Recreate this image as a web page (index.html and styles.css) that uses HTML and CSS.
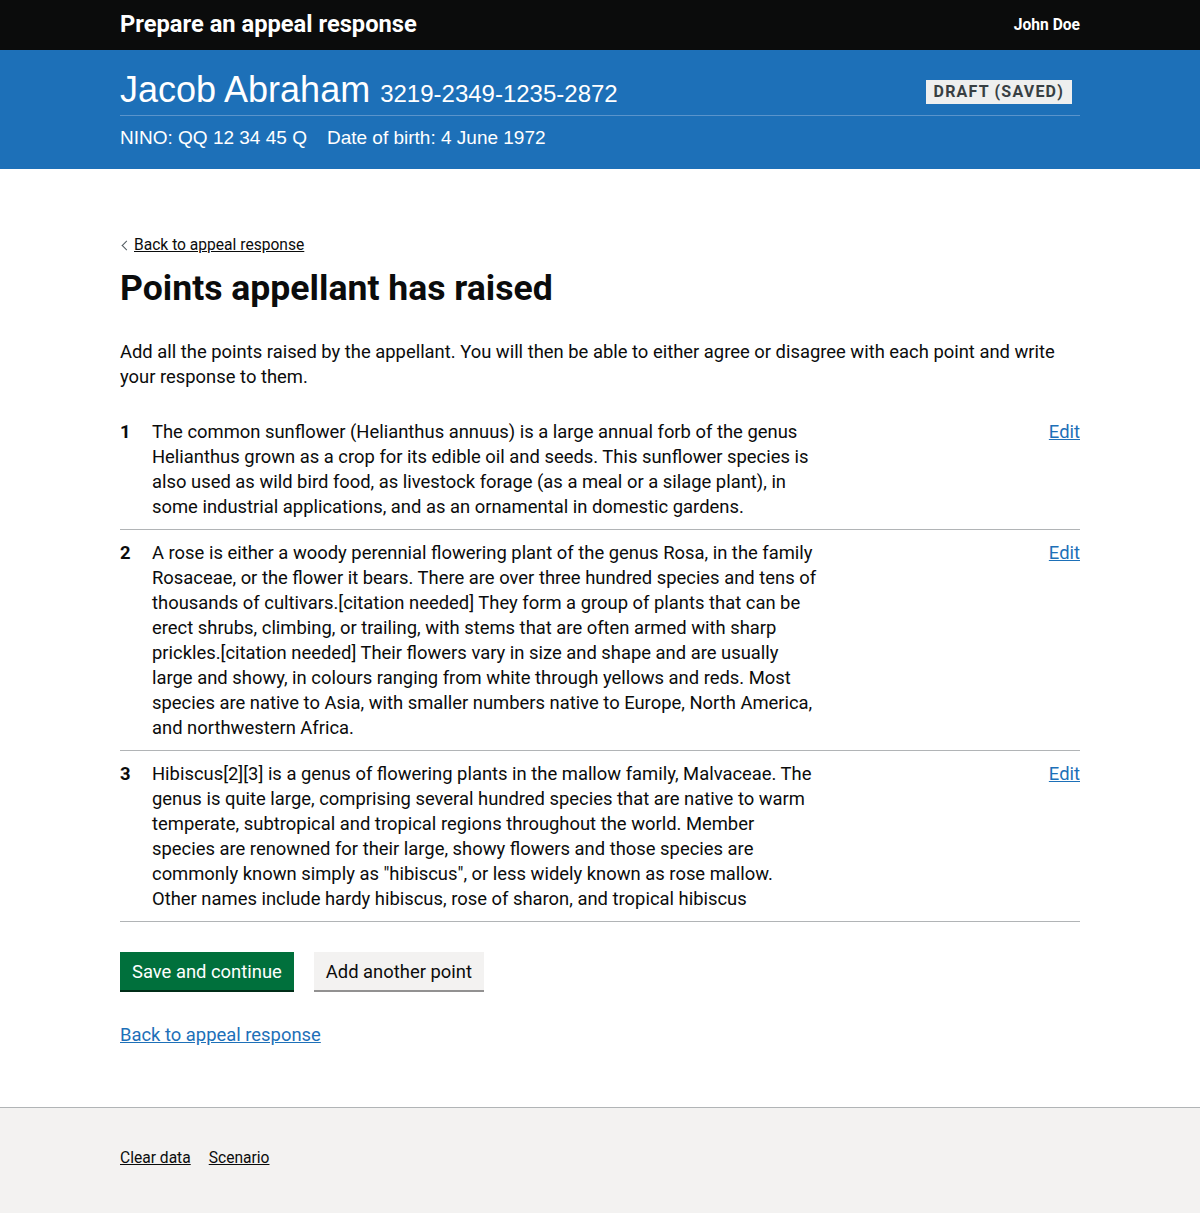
FILE: index.html
```html
<!DOCTYPE html>
<html lang="en">
<head>
<meta charset="utf-8">
<title>Points appellant has raised</title>
<link rel="stylesheet" href="styles.css">
</head>
<body>
<header class="topbar">
  <div class="wrap topbar-inner">
    <span class="service">Prepare an appeal response</span>
    <span class="user">John Doe</span>
  </div>
</header>
<section class="banner">
  <div class="wrap">
    <div class="banner-top">
      <h2 class="person">Jacob Abraham <span class="ref">3219-2349-1235-2872</span></h2>
      <strong class="tag">Draft (saved)</strong>
    </div>
    <div class="banner-meta">
      <span class="meta-item">NINO: QQ 12 34 45 Q</span>
      <span class="meta-item">Date of birth: 4 June 1972</span>
    </div>
  </div>
</section>
<main class="wrap main">
  <a class="back-link" href="#">Back to appeal response</a>
  <h1 class="heading">Points appellant has raised</h1>
  <p class="body">Add all the points raised by the appellant. You will then be able to either agree or disagree with each point and write your response to them.</p>
  <ol class="points">
    <li class="point">
      <span class="num">1</span>
      <span class="text">The common sunflower (Helianthus annuus) is a large annual forb of the genus Helianthus grown as a crop for its edible oil and seeds. This sunflower species is also used as wild bird food, as livestock forage (as a meal or a silage plant), in some industrial applications, and as an ornamental in domestic gardens.</span>
      <a class="edit" href="#">Edit</a>
    </li>
    <li class="point">
      <span class="num">2</span>
      <span class="text">A rose is either a woody perennial flowering plant of the genus Rosa, in the family Rosaceae, or the flower it bears. There are over three hundred species and tens of thousands of cultivars.[citation needed] They form a group of plants that can be erect shrubs, climbing, or trailing, with stems that are often armed with sharp prickles.[citation needed] Their flowers vary in size and shape and are usually large and showy, in colours ranging from white through yellows and reds. Most species are native to Asia, with smaller numbers native to Europe, North America, and northwestern Africa.</span>
      <a class="edit" href="#">Edit</a>
    </li>
    <li class="point">
      <span class="num">3</span>
      <span class="text">Hibiscus[2][3] is a genus of flowering plants in the mallow family, Malvaceae. The genus is quite large, comprising several hundred species that are native to warm temperate, subtropical and tropical regions throughout the world. Member species are renowned for their large, showy flowers and those species are commonly known simply as "hibiscus", or less widely known as rose mallow. Other names include hardy hibiscus, rose of sharon, and tropical hibiscus</span>
      <a class="edit" href="#">Edit</a>
    </li>
  </ol>
  <div class="buttons">
    <button class="btn btn-primary">Save and continue</button>
    <button class="btn btn-secondary">Add another point</button>
  </div>
  <a class="link" href="#">Back to appeal response</a>
</main>
<footer class="footer">
  <div class="wrap footer-links">
    <a href="#">Clear data</a>
    <a href="#">Scenario</a>
  </div>
</footer>
</body>
</html>
```
FILE: styles.css
```css
* { box-sizing: border-box; }
html, body { margin: 0; padding: 0; }
body {
  font-family: Roboto, "Liberation Sans", sans-serif;
  color: #0b0c0c;
  background: #fff;
}
.wrap {
  width: 960px;
  margin: 0 auto;
}
.topbar {
  background: #0b0c0c;
  color: #fff;
  height: 50px;
}
.topbar-inner {
  display: flex;
  justify-content: space-between;
  align-items: center;
  height: 50px;
}
.service {
  font-weight: 700;
  font-size: 23.7px;
  line-height: 28px;
  margin-top: -2px;
}
.user {
  font-weight: 700;
  font-size: 15.6px;
  margin-top: 0;
}
.banner {
  background: #1d70b8;
  color: #fff;
  font-family: "Liberation Sans", Arial, sans-serif;
  padding-top: 20px;
  height: 119px;
}
.banner-top {
  display: flex;
  justify-content: space-between;
  align-items: flex-start;
  border-bottom: 1px solid #5a94cb;
  padding-bottom: 1px;
}
.person {
  margin: 0;
  font-weight: 400;
  font-size: 36px;
  line-height: 40px;
}
.ref { font-size: 24px; }
.tag {
  margin: 10px 8px 0 0;
  background: #eeefef;
  color: #383f43;
  font-family: Roboto, "Liberation Sans", sans-serif;
  font-weight: 700;
  font-size: 16px;
  line-height: 16px;
  letter-spacing: 1.2px;
  text-transform: uppercase;
  padding: 4px 8px;
}
.banner-meta {
  display: flex;
  gap: 20px;
  font-size: 19px;
  padding-top: 11px;
}
.main {
  padding-top: 66px;
  padding-bottom: 60px;
}
.back-link {
  display: inline-block;
  position: relative;
  padding-left: 14px;
  font-size: 15.6px;
  line-height: 20px;
  color: #0b0c0c;
  text-decoration: underline;
}
.back-link::before {
  content: "";
  position: absolute;
  left: 3px;
  top: 7px;
  width: 6px;
  height: 6px;
  border-left: 1px solid #505a5f;
  border-bottom: 1px solid #505a5f;
  transform: rotate(45deg);
}
.heading {
  font-size: 35.6px;
  line-height: 40px;
  font-weight: 700;
  margin: 13px 0 31px;
}
.body {
  font-size: 18.4px;
  line-height: 25px;
  margin: 0 0 20px;
}
.points {
  list-style: none;
  margin: 0;
  padding: 0;
}
.point {
  display: flex;
  align-items: flex-start;
  font-size: 18.4px;
  line-height: 25px;
  padding: 10px 0;
  border-bottom: 1px solid #b1b4b6;
}
.num {
  width: 32px;
  flex: none;
  font-weight: 700;
}
.text {
  width: 667.5px;
  flex: none;
}
.edit {
  margin-left: auto;
  color: #1d70b8;
  text-decoration: underline;
}
.buttons {
  display: flex;
  gap: 20px;
  margin-top: 30px;
  margin-bottom: 32px;
}
.btn {
  font-family: Roboto, "Liberation Sans", sans-serif;
  font-size: 18.4px;
  line-height: 19px;
  padding: 10px 12px 9px;
  border: 0;
  cursor: pointer;
}
.btn-primary {
  background: #00703c;
  color: #fff;
  box-shadow: 0 2px 0 #002d18;
}
.btn-secondary {
  background: #f3f2f1;
  color: #0b0c0c;
  box-shadow: 0 2px 0 #929191;
}
.link {
  font-size: 18.4px;
  line-height: 25px;
  color: #1d70b8;
  text-decoration: underline;
}
.footer {
  background: #f3f2f1;
  border-top: 1px solid #b1b4b6;
  height: 107px;
}
.footer-links {
  display: flex;
  gap: 18px;
  padding-top: 40px;
  font-size: 15.6px;
  line-height: 20px;
}
.footer-links a {
  color: #0b0c0c;
  text-decoration: underline;
}
```
